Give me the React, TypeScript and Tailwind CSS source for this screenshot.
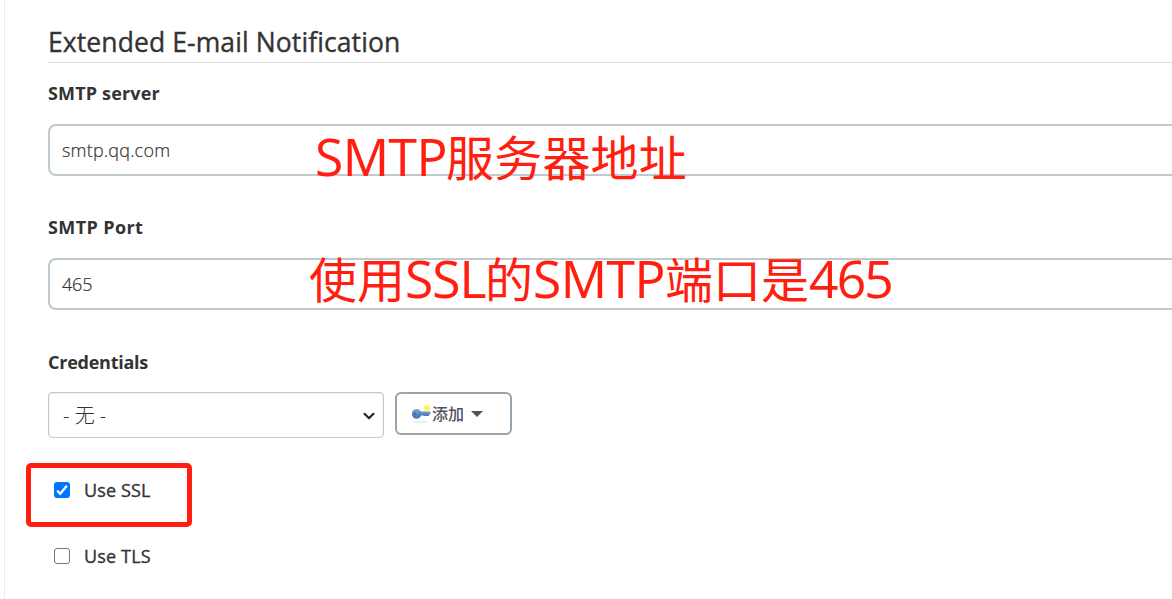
import { useState, type ReactNode } from "react";
import { ChevronDown } from "lucide-react";

function Label({ children, className = "" }: { children: ReactNode; className?: string }) {
  return (
    <label className={`block h-6 text-[18px] leading-6 font-bold whitespace-nowrap ${className}`}>
      {children}
    </label>
  );
}

function TextField({
  value,
  onChange,
  className,
}: {
  value: string;
  onChange: (v: string) => void;
  className: string;
}) {
  return (
    <input
      value={value}
      onChange={(e) => onChange(e.target.value)}
      className={`block h-[52px] w-full rounded-l-[8px] border-2 border-r-0 border-[#bfcacf] bg-white px-3 text-[18px] font-light outline-none [-webkit-text-stroke:0.2px] ${className}`}
    />
  );
}

function CheckRow({
  label,
  checked,
  onToggle,
}: {
  label: string;
  checked: boolean;
  onToggle: () => void;
}) {
  return (
    <label className="flex h-6 items-center gap-3.5 pl-1.5">
      <input type="checkbox" checked={checked} onChange={onToggle} className="sr-only" />
      <span
        className={`flex size-4 items-center justify-center rounded-[3px] ${
          checked ? "bg-[#0075ff]" : "border border-[#767676] bg-white"
        }`}
      >
        {checked && (
          <svg viewBox="0 0 16 16" className="size-4" fill="none">
            <path d="M3.2 8.600 6.200 11.800 12.900 3.800" stroke="white" strokeWidth="2.3" />
          </svg>
        )}
      </span>
      <span className="text-[18px] leading-6 tracking-[0.15px] [-webkit-text-stroke:0.35px]">
        {label}
      </span>
    </label>
  );
}

function KeyIcon() {
  return (
    <svg viewBox="0 0 20 20" className="h-5 w-5 shrink-0">
      <defs>
        <radialGradient id="glow">
          <stop offset="0.3" stopColor="#fff32a" />
          <stop offset="1" stopColor="#fff45c" stopOpacity="0.35" />
        </radialGradient>
        <linearGradient id="key" x1="0" y1="0" x2="0" y2="1">
          <stop offset="0" stopColor="#86a9d2" />
          <stop offset="0.6" stopColor="#4f80bb" />
          <stop offset="1" stopColor="#4675b0" />
        </linearGradient>
      </defs>
      <ellipse cx="9" cy="18" rx="7.500" ry="1.500" fill="#efefef" />
      <path
        d="M1 9.800C1 6.500 3 4.800 5.800 4.900 8.300 5 9.300 6.600 10 7.600H19.300V10.500H18V12H12.500V11.600H10.200C9.500 13.300 8 14.800 5.600 14.800 2.800 14.800 1 12.800 1 9.800Z"
        fill="url(#key)"
      />
      <ellipse cx="3.500" cy="9.900" rx="1" ry="2" fill="#4470a8" />
      <circle cx="16" cy="4" r="3.700" fill="url(#glow)" />
    </svg>
  );
}

// Latin runs are set slightly larger than the Chinese ones around them.
function Latin({ children, className }: { children: string; className: string }) {
  return (
    <span
      className={`inline-block text-[51.5px] whitespace-nowrap [-webkit-text-stroke:0.15px] ${className}`}
    >
      {children}
    </span>
  );
}

function Note({ children, className }: { children: ReactNode; className: string }) {
  return (
    <div
      className={`pointer-events-none absolute flex h-14 items-baseline text-[48px] leading-[56px] whitespace-nowrap text-[#ff1e10] ${className}`}
    >
      {children}
    </div>
  );
}

export default function App() {
  const [server, setServer] = useState("smtp.qq.com");
  const [port, setPort] = useState("465");
  const [ssl, setSsl] = useState(true);
  const [tls, setTls] = useState(false);

  return (
    <div className="h-[599px] overflow-hidden bg-white pl-1 font-['Open_Sans','Noto_Sans_CJK_SC',sans-serif] text-[#333]">
      <main className="h-full border-l border-[#ececec] pl-[43px]">
        <h1 className="h-[63px] border-b border-[#dddddd] pt-6 text-[26.5px] leading-9 tracking-[0.1px] [-webkit-text-stroke:0.35px]">
          Extended E-mail Notification
        </h1>

        <Label className="mt-[18px] tracking-[0.15px]">SMTP server</Label>
        <div className="relative mt-[19px]">
          <TextField value={server} onChange={setServer} className="tracking-[0.2px]" />
          <Note className="top-[4px] left-[267px]">
            <Latin className="w-[131px] tracking-[-0.5px]">SMTP</Latin>
            <span className="tracking-[0.2px]">服务器地址</span>
          </Note>
        </div>

        <Label className="mt-[39px] tracking-[0.4px]">SMTP Port</Label>
        <div className="relative mt-[19px]">
          <TextField value={port} onChange={setPort} className="tracking-[-0.2px]" />
          <Note className="top-[-8px] left-[261px]">
            <span>使用</span>
            <Latin className="w-20 tracking-[-1px]">SSL</Latin>
            <span>的</span>
            <Latin className="w-[132px] tracking-[-0.5px]">SMTP</Latin>
            <span>端口是</span>
            <Latin className="tracking-[-1.8px]">465</Latin>
          </Note>
        </div>

        <Label className="mt-10 tracking-[-0.25px]">Credentials</Label>
        <div className="mt-[18px] flex items-start gap-[11px]">
          <button className="flex h-[46px] w-[336px] items-center justify-between rounded-[4px] border border-[#bfcad0] pt-0.5 pr-[5px] pl-3.5 text-[20px] font-light shadow-[inset_0_1px_2px_rgba(0,0,0,0.07)]">
            <span>- 无 -</span>
            <ChevronDown className="size-[18px] text-[#222]" strokeWidth={2.8} />
          </button>
          <button className="flex h-[43px] w-[117px] items-center rounded-[6px] border-2 border-[#98a4ad] pl-3.5 text-[16px] font-medium text-[#4d545d]">
            <KeyIcon />
            <span className="ml-px">添加</span>
            <span className="ml-[7px] border-x-[6px] border-t-[6px] border-x-transparent border-t-[#4d545d]" />
          </button>
        </div>

        <div className="mt-[25px] -ml-[22px] h-16 w-[166px] rounded-[5px] border-[5px] border-[#ff1e10] pt-[10px] pl-[17px]">
          <CheckRow label="Use SSL" checked={ssl} onToggle={() => setSsl(!ssl)} />
        </div>
        <div className="mt-[17px]">
          <CheckRow label="Use TLS" checked={tls} onToggle={() => setTls(!tls)} />
        </div>
      </main>
    </div>
  );
}
